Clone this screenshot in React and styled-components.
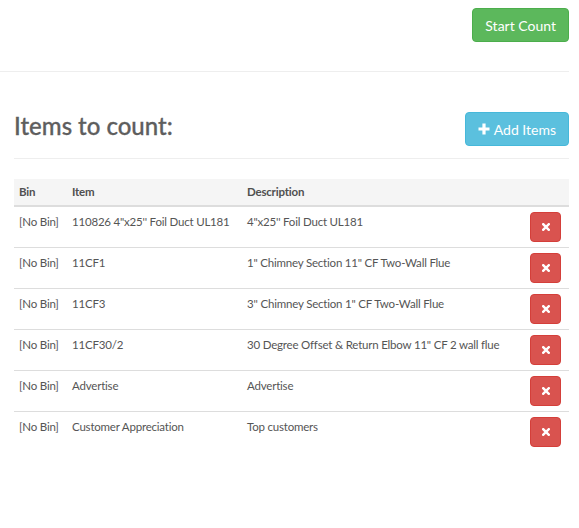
import React from "react"
import styled, { createGlobalStyle } from "styled-components"

const GlobalStyle = createGlobalStyle`
  body {
    margin: 0;
    background: #fff;
    font-family: "Lato", "Liberation Sans", sans-serif;
    font-size: 12px;
    color: #555;
  }
`

const Page = styled.div`
  padding-right: 10px;
`

const TopBar = styled.div`
  display: flex;
  justify-content: flex-end;
  align-items: flex-start;
  height: 63px;
  padding-top: 8px;
  border-bottom: 1px solid #eee;
`

const Button = styled.button`
  display: inline-flex;
  align-items: center;
  justify-content: center;
  gap: 4px;
  height: 34px;
  padding: 0 12px;
  font-family: inherit;
  font-size: 14px;
  color: #fff;
  border-radius: 4px;
  border: 1px solid ${p => p.border};
  background: ${p => p.bg};
  cursor: pointer;
`

const Section = styled.section`
  padding-left: 14px;
`

const Header = styled.div`
  display: flex;
  justify-content: space-between;
  align-items: center;
  margin-top: 40px;
  padding-bottom: 12px;
  border-bottom: 1px solid #eee;
`

const Title = styled.h2`
  margin: 0 0 6px;
  font-size: 24px;
  line-height: 1.1;
  font-weight: 500;
  color: #5e5e5e;
  -webkit-text-stroke: 0.3px #5e5e5e;
`

const Table = styled.table`
  width: 100%;
  margin-top: 20px;
  border-collapse: collapse;
  table-layout: fixed;
  font-size: 11.5px;
  letter-spacing: -0.2px;
  th {
    text-align: left;
    font-weight: bold;
    color: #505050;
    background: #f5f5f5;
    padding: 5px;
    line-height: 16px;
    border-bottom: 2px solid #ddd;
  }
  td {
    vertical-align: top;
    padding: 5px;
    line-height: 20px;
    white-space: nowrap;
  }
  tbody tr + tr td {
    border-top: 1px solid #ddd;
  }
  td.action {
    text-align: right;
    padding-right: 8px;
  }
`

const DeleteButton = styled.button`
  width: 31px;
  height: 30px;
  padding: 0;
  display: inline-flex;
  align-items: center;
  justify-content: center;
  background: #d9534f;
  border: 1px solid #d43f3a;
  border-radius: 4px;
  cursor: pointer;
`

const Cross = () => (
  <svg width="8" height="8" viewBox="0 0 10 10">
    <path d="M1.5 1.5 L8.5 8.5 M8.5 1.5 L1.5 8.5" stroke="#fff" strokeWidth="3" strokeLinecap="square" />
  </svg>
)

const Plus = () => (
  <svg width="12" height="12" viewBox="0 0 12 12">
    <path d="M6 0.5 V11.5 M0.5 6 H11.5" stroke="#fff" strokeWidth="3.2" />
  </svg>
)

const items = [
  ["110826 4\"x25'' Foil Duct UL181", "4\"x25'' Foil Duct UL181"],
  ["11CF1", "1\" Chimney Section 11\" CF Two-Wall Flue"],
  ["11CF3", "3'' Chimney Section 1\" CF Two-Wall Flue"],
  ["11CF30/2", "30 Degree Offset & Return Elbow 11\" CF 2 wall flue"],
  ["Advertise", "Advertise"],
  ["Customer Appreciation", "Top customers"]
]

const App = () => (
  <Page>
    <GlobalStyle />
    <TopBar>
      <Button bg="#5cb85c" border="#4cae4c">Start Count</Button>
    </TopBar>
    <Section>
      <Header>
        <Title>Items to count:</Title>
        <Button bg="#5bc0de" border="#46b8da">
          <Plus /> Add Items
        </Button>
      </Header>
      <Table>
        <colgroup>
          <col style={{ width: 53 }} />
          <col style={{ width: 175 }} />
          <col />
          <col style={{ width: 44 }} />
        </colgroup>
        <thead>
          <tr>
            <th>Bin</th>
            <th>Item</th>
            <th>Description</th>
            <th />
          </tr>
        </thead>
        <tbody>
          {items.map(([item, desc]) => (
            <tr key={item}>
              <td>[No Bin]</td>
              <td>{item}</td>
              <td>{desc}</td>
              <td className="action">
                <DeleteButton>
                  <Cross />
                </DeleteButton>
              </td>
            </tr>
          ))}
        </tbody>
      </Table>
    </Section>
  </Page>
)

export default App
